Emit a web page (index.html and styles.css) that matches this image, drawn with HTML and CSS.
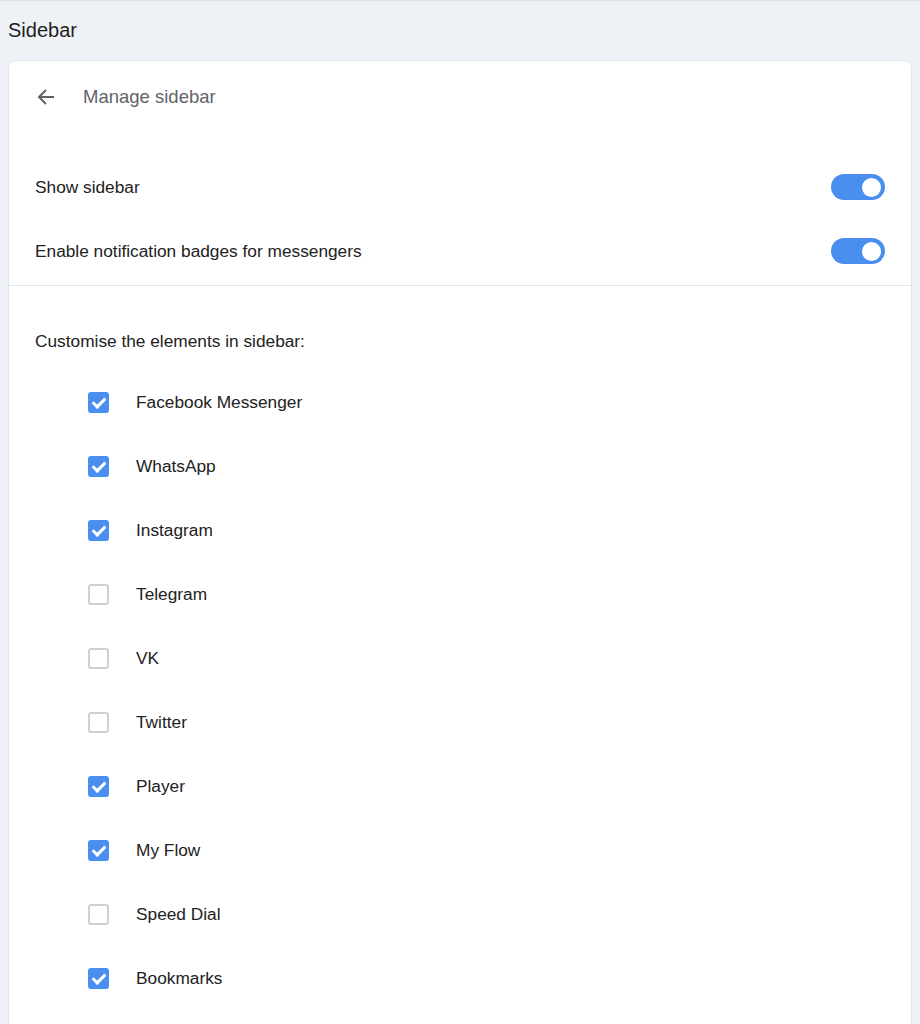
FILE: index.html
```html
<!DOCTYPE html>
<html>
<head>
<meta charset="utf-8">
<link rel="stylesheet" href="styles.css">
</head>
<body>
<div class="page">
  <h1 class="page-title">Sidebar</h1>
  <div class="card">
    <div class="card-header">
      <svg class="back" width="20" height="20" viewBox="0 0 20 20"><path d="M18 10H3.5M10 3 3 10l7 7" fill="none" stroke="#5f6368" stroke-width="2"/></svg>
      <span class="header-title">Manage sidebar</span>
    </div>
    <div class="toggles">
      <div class="row"><span>Show sidebar</span><span class="toggle"><span class="knob"></span></span></div>
      <div class="row"><span>Enable notification badges for messengers</span><span class="toggle"><span class="knob"></span></span></div>
    </div>
    <div class="custom">
      <div class="custom-title">Customise the elements in sidebar:</div>
      <ul class="list">
        <li><span class="cb on"></span>Facebook Messenger</li>
        <li><span class="cb on"></span>WhatsApp</li>
        <li><span class="cb on"></span>Instagram</li>
        <li><span class="cb"></span>Telegram</li>
        <li><span class="cb"></span>VK</li>
        <li><span class="cb"></span>Twitter</li>
        <li><span class="cb on"></span>Player</li>
        <li><span class="cb on"></span>My Flow</li>
        <li><span class="cb"></span>Speed Dial</li>
        <li><span class="cb on"></span>Bookmarks</li>
      </ul>
    </div>
  </div>
</div>
</body>
</html>
```
FILE: styles.css
```css
html, body { margin: 0; padding: 0; }
body {
  background: #eef1f5;
  font-family: "Liberation Sans", Arial, sans-serif;
  color: #222;
  border-top: 1px solid #dde1e6;
  overflow: hidden;
  height: 1023px;
}
.page { padding: 0 8px; }
.page-title {
  margin: 0;
  font-size: 20px;
  font-weight: normal;
  line-height: 22px;
  padding-top: 18px;
  height: 41px;
  color: #1f1f1f;
}
.card {
  background: #fff;
  border: 1px solid #e1e4e8;
  border-radius: 8px;
  min-height: 1100px;
}
.card-header {
  display: flex;
  align-items: center;
  height: 72px;
  padding-left: 27px;
}
.back { display: block; margin-right: 27px; }
.header-title { font-size: 18.5px; color: #5f6368; }
.toggles {
  padding-top: 22px;
  padding-bottom: 2px;
  border-bottom: 1px solid #e2e4e8;
}
.row {
  height: 64px;
  display: flex;
  align-items: center;
  justify-content: space-between;
  padding: 0 26px 0 26px;
  font-size: 17.3px;
}
.toggle {
  width: 54px;
  height: 26px;
  border-radius: 13px;
  background: #4a8ef0;
  display: flex;
  align-items: center;
  justify-content: flex-end;
  padding-right: 4px;
  box-sizing: border-box;
}
.knob {
  width: 19px;
  height: 19px;
  border-radius: 50%;
  background: #fff;
}
.custom { padding: 44px 26px 0; }
.custom-title { font-size: 17.3px; line-height: 22px; }
.list { list-style: none; margin: 18px 0 0; padding: 0 0 0 53px; }
.list li {
  height: 64px;
  display: flex;
  align-items: center;
  font-size: 17.3px;
}
.cb {
  width: 21px;
  height: 21px;
  box-sizing: border-box;
  border: 2px solid #d0d0d0;
  border-radius: 3px;
  margin-right: 27px;
  position: relative;
}
.cb.on { background: #4a8ef0; border-color: #4a8ef0; }
.cb.on::after {
  content: "";
  position: absolute;
  left: 5px;
  top: 1px;
  width: 5px;
  height: 10px;
  border: solid #fff;
  border-width: 0 3px 3px 0;
  transform: rotate(45deg);
}
```
